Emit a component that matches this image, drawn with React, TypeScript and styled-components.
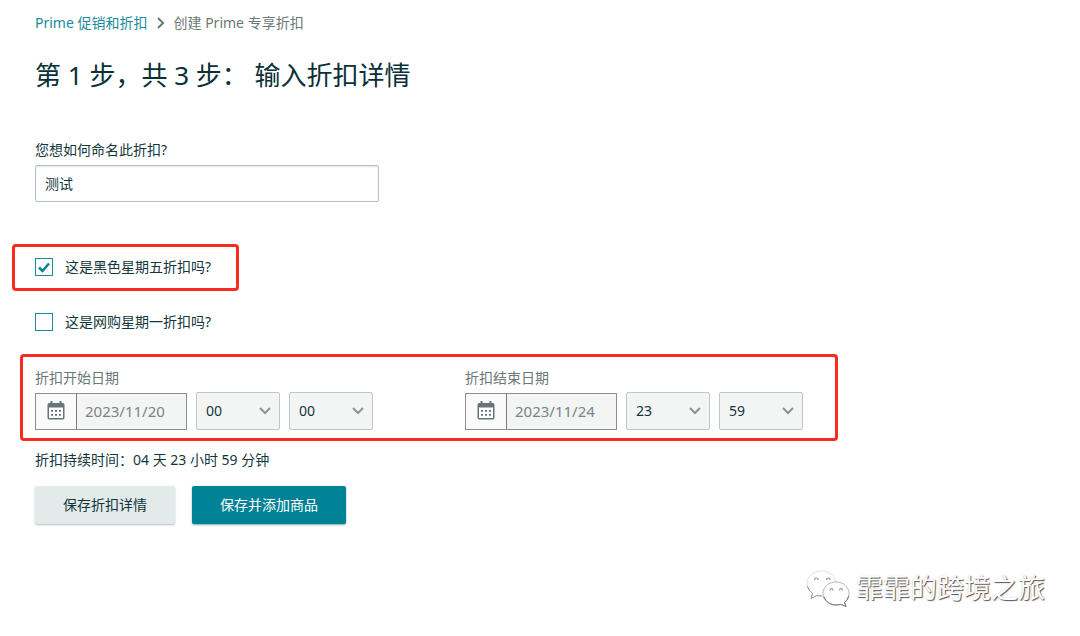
import React, { useState } from "react";
import styled, { createGlobalStyle } from "styled-components";

const GlobalStyle = createGlobalStyle`
  * { box-sizing: border-box; }
  body {
    margin: 0;
    background: #fff;
    color: #12363d;
    font-family: "Noto Sans", "Noto Sans CJK SC", sans-serif;
    font-size: 14px;
    line-height: 22px;
  }
  button, input, select { font: inherit; color: inherit; margin: 0; }
`;

const Page = styled.main`
  display: flex;
  flex-direction: column;
  padding: 12px 35px;
`;

const Breadcrumb = styled.nav`
  display: flex;
  align-items: center;
  gap: 9px;
  color: #6c7778;
`;

const CrumbLink = styled.a`
  color: #1a8a9c;
  text-decoration: none;
`;

const Title = styled.h1`
  margin: 21px 0 44px;
  color: #0a3038;
  font-size: 26px;
  line-height: 40px;
  font-weight: 400;
`;

const Field = styled.div`
  display: flex;
  flex-direction: column;
  gap: 4px;
  margin-bottom: 54px;
`;

const TextInput = styled.input`
  width: 344px;
  max-width: 100%;
  height: 37px;
  padding: 0 9px 2px;
  border: 1px solid #b5c2c2;
  border-radius: 2px;
  background: #fff;
  box-shadow: inset 0 1px 2px #dfe5e5;
`;

const Marked = styled.div<{ $top: number; $right: number; $bottom: number; $left: number }>`
  position: relative;
  align-self: flex-start;
  &::after {
    content: "";
    position: absolute;
    top: -${(p) => p.$top}px;
    right: -${(p) => p.$right}px;
    bottom: -${(p) => p.$bottom}px;
    left: -${(p) => p.$left}px;
    border: 3px solid #fb2a20;
    border-radius: 4px;
    pointer-events: none;
  }
`;

const CheckList = styled.div`
  display: flex;
  flex-direction: column;
  align-items: flex-start;
  gap: 33px;
  margin-bottom: 34px;
`;

const CheckLabel = styled.label`
  display: flex;
  align-items: center;
  gap: 12px;
`;

const CheckBox = styled.span`
  display: grid;
  width: 18px;
  height: 18px;
  > * { grid-area: 1 / 1; }
  svg { place-self: center; pointer-events: none; }
  input:not(:checked) + svg { visibility: hidden; }
`;

const CheckInput = styled.input`
  appearance: none;
  width: 18px;
  height: 18px;
  border: 1px solid #1a8a9c;
  background: #fff;
`;

const Dates = styled.div`
  display: flex;
  flex-wrap: wrap;
  gap: 16px 92px;
`;

const DateField = styled.div`
  display: flex;
  flex-direction: column;
  gap: 3px;
`;

const DateLabel = styled.label`
  color: #6c7778;
`;

const DateRow = styled.div`
  display: flex;
  align-items: flex-end;
  gap: 9px;
`;

const DateGroup = styled.div`
  display: flex;
  width: 152px;
  height: 37px;
  border: 1px solid #8a8f8f;
`;

const CalendarButton = styled.button`
  display: grid;
  place-items: center;
  width: 41px;
  padding: 0 0 2px;
  border: 0;
  border-right: 1px solid #777d7d;
  background: #fafafa;
`;

const DateInput = styled.input`
  flex: 1;
  min-width: 0;
  padding: 0 8px 2px;
  border: 0;
  background: #f3f5f4;
  color: #7b8484;
  font-size: 15px;
`;

const SelectBox = styled.div`
  display: grid;
  width: 84px;
  height: 38px;
  > * { grid-area: 1 / 1; }
  svg { place-self: center end; margin-right: 9px; pointer-events: none; }
`;

const Select = styled.select`
  appearance: none;
  width: 100%;
  padding: 0 9px;
  border: 1px solid #bcc8c8;
  border-radius: 2px;
  background: #f3f5f4;
`;

const Duration = styled.p`
  margin: 19px 0 15px;
`;

const Actions = styled.div`
  display: flex;
  flex-wrap: wrap;
  gap: 17px;
`;

const Button = styled.button<{ $primary?: boolean }>`
  height: 38px;
  padding: 0 28px;
  border: 0;
  border-radius: 2px;
  background: ${(p) => (p.$primary ? "#008296" : "#e2eaea")};
  color: ${(p) => (p.$primary ? "#fff" : "#12363d")};
  box-shadow: 0 1px 2px ${(p) => (p.$primary ? "#7fa9af" : "#b4bdbd")};
`;

const Signature = styled.footer`
  display: flex;
  align-items: center;
  justify-content: flex-end;
  gap: 6px;
  margin-top: 44px;
  color: #fff;
  font-size: 27px;
  line-height: 40px;
  text-shadow: 1px 1px 1px #555, 0 0 1px #bbb;
`;

function Chevron() {
  return (
    <svg width="12" height="8" viewBox="0 0 12 8" fill="none" stroke="#879596" strokeWidth="2" aria-hidden="true">
      <path d="M1 1l5 5 5-5" />
    </svg>
  );
}

function CalendarIcon() {
  return (
    <svg width="18" height="19" viewBox="0 0 18 19" aria-hidden="true">
      <path fill="#66757a" d="M3.500 0h2v2h7V0h2v2H16q1.500 0 1.500 2v12.500q0 2-1.500 2H2q-1.500 0-1.500-2V4Q.5 2 2 2h1.500z" />
      <path fill="#fff" d="M2 6.500h14v10.500H2z" />
      <path fill="#66757a" d="M4 9h2v1.800H4zm4 0h2v1.800H8zm4 0h2v1.800h-2zM4 13h2v1.800H4zm4 0h2v1.800H8zm4 0h2v1.800h-2z" />
    </svg>
  );
}

function ChatLogo() {
  return (
    <svg width="44" height="37" viewBox="0 0 44 37" aria-hidden="true" strokeLinejoin="round">
      <g fill="#fff">
        <path stroke="#e2e2e2" d="M15.500 1C7.500 1 1 6.500 1 13.500c0 4 2 7.500 5.500 9.800L5 28.500l6-3q2.500.7 5 .6C30 25 30 18 30 13.500 30 6.500 23.500 1 15.500 1z" />
        <path fill="none" stroke="#999" d="M1.300 16q1 4.500 5.200 7.300L5 28.500l6-3 5 .5" />
        <path stroke="#b8b8b8" d="M30 12c-7.500 0-13 5-13 11.500S22.500 35 30 35q2.300 0 4.500-.7L40 36.500l-1.500-4c3-2.200 4.500-5.300 4.500-9C43 17 37.500 12 30 12z" />
        <path fill="none" stroke="#777" d="M18 27c2 5 6.500 8 12 8q2.300 0 4.500-.7L40 36.500l-1.500-4q3.200-2.700 4.200-6.500" />
      </g>
      <g fill="none" stroke="#999" strokeWidth="1.200">
        <path d="M8.500 10q0-2 1.800-2t1.800 2M20.500 10q0-2 1.800-2t1.800 2M24 20.500q0-1.800 1.500-1.800t1.500 1.800M33.500 20.500q0-1.800 1.500-1.800t1.500 1.800" />
      </g>
    </svg>
  );
}

function Check({ label, initial }: { label: string; initial: boolean }) {
  const [on, setOn] = useState(initial);
  return (
    <CheckLabel>
      <CheckBox>
        <CheckInput type="checkbox" checked={on} onChange={(e) => setOn(e.target.checked)} />
        <svg width="12" height="11" viewBox="0 0 12 11" fill="none" stroke="#008296" strokeWidth="2.500" aria-hidden="true">
          <path d="M1 5.500l3.500 3.500L11 1.500" />
        </svg>
      </CheckBox>
      {label}
    </CheckLabel>
  );
}

function TimeSelect({ label, value, count }: { label: string; value: string; count: number }) {
  return (
    <SelectBox>
      <Select aria-label={label} defaultValue={value}>
        {Array.from({ length: count }, (_, i) => String(i).padStart(2, "0")).map((n) => (
          <option key={n}>{n}</option>
        ))}
      </Select>
      <Chevron />
    </SelectBox>
  );
}

type DateProps = { id: string; label: string; date: string; hour: string; minute: string };

function DateTime({ id, label, date, hour, minute }: DateProps) {
  return (
    <DateField>
      <DateLabel htmlFor={id}>{label}</DateLabel>
      <DateRow>
        <DateGroup>
          <CalendarButton type="button" aria-label="选择日期">
            <CalendarIcon />
          </CalendarButton>
          <DateInput id={id} defaultValue={date} />
        </DateGroup>
        <TimeSelect label="小时" value={hour} count={24} />
        <TimeSelect label="分钟" value={minute} count={60} />
      </DateRow>
    </DateField>
  );
}

export default function App() {
  return (
    <>
      <GlobalStyle />
      <Page>
        <Breadcrumb>
          <CrumbLink href="#prime">Prime 促销和折扣</CrumbLink>
          <svg width="8" height="12" viewBox="0 0 8 12" fill="none" stroke="#6c7778" strokeWidth="2" aria-hidden="true">
            <path d="M1 1l5 5-5 5" />
          </svg>
          <span>创建 Prime 专享折扣</span>
        </Breadcrumb>
        <Title>第 1 步，共 3 步： 输入折扣详情</Title>
        <Field>
          <label htmlFor="name">您想如何命名此折扣?</label>
          <TextInput id="name" defaultValue="测试" />
        </Field>
        <CheckList>
          <Marked $top={12} $right={28} $bottom={13} $left={23}>
            <Check label="这是黑色星期五折扣吗?" initial />
          </Marked>
          <Check label="这是网购星期一折扣吗?" initial={false} />
        </CheckList>
        <Marked $top={13} $right={35} $bottom={11} $left={15}>
          <Dates>
            <DateTime id="start" label="折扣开始日期" date="2023/11/20" hour="00" minute="00" />
            <DateTime id="end" label="折扣结束日期" date="2023/11/24" hour="23" minute="59" />
          </Dates>
        </Marked>
        <Duration>折扣持续时间：04 天 23 小时 59 分钟</Duration>
        <Actions>
          <Button type="button">保存折扣详情</Button>
          <Button type="button" $primary>保存并添加商品</Button>
        </Actions>
        <Signature>
          <ChatLogo />
          霏霏的跨境之旅
        </Signature>
      </Page>
    </>
  );
}
